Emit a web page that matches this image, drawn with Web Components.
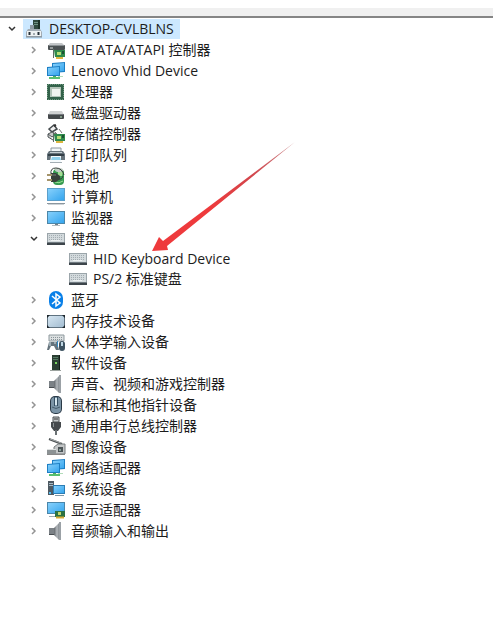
<!DOCTYPE html>
<html lang="zh-CN">
<head>
<meta charset="utf-8">
<meta name="viewport" content="width=device-width, initial-scale=1">
<title>设备管理器</title>
<style>
    body {
        margin: 0;
        background: #fff;
        color: #1c1c1c;
        font-family: "Open Sans", "Noto Sans CJK SC", sans-serif;
        font-size: 14px;
    }
</style>
</head>
<body>
<device-manager>
    <device-node label="DESKTOP-CVLBLNS" icon="root" open selected>
        <device-node label="IDE ATA/ATAPI 控制器" icon="ide"></device-node>
        <device-node label="Lenovo Vhid Device" icon="network"></device-node>
        <device-node label="处理器" icon="cpu"></device-node>
        <device-node label="磁盘驱动器" icon="disk"></device-node>
        <device-node label="存储控制器" icon="storage"></device-node>
        <device-node label="打印队列" icon="printer"></device-node>
        <device-node label="电池" icon="battery"></device-node>
        <device-node label="计算机" icon="computer"></device-node>
        <device-node label="监视器" icon="monitor"></device-node>
        <device-node label="键盘" icon="keyboard" open>
            <device-node label="HID Keyboard Device" icon="keyboard" leaf></device-node>
            <device-node label="PS/2 标准键盘" icon="keyboard" leaf></device-node>
        </device-node>
        <device-node label="蓝牙" icon="bluetooth"></device-node>
        <device-node label="内存技术设备" icon="memory"></device-node>
        <device-node label="人体学输入设备" icon="hid"></device-node>
        <device-node label="软件设备" icon="software"></device-node>
        <device-node label="声音、视频和游戏控制器" icon="speaker"></device-node>
        <device-node label="鼠标和其他指针设备" icon="mouse"></device-node>
        <device-node label="通用串行总线控制器" icon="usb"></device-node>
        <device-node label="图像设备" icon="camera"></device-node>
        <device-node label="网络适配器" icon="network"></device-node>
        <device-node label="系统设备" icon="system"></device-node>
        <device-node label="显示适配器" icon="display"></device-node>
        <device-node label="音频输入和输出" icon="speaker"></device-node>
    </device-node>
    <pointer-arrow slot="overlay"></pointer-arrow>
</device-manager>

<script>
// Shared gradients, repeated in every icon because ids do not cross shadow roots
const DEFS = `
    <defs>
        <linearGradient id="screen" x1="0" y1="0" x2="1" y2="1">
            <stop offset="0" stop-color="#86d0fb"/><stop offset="1" stop-color="#35a5ee"/>
        </linearGradient>
        <linearGradient id="metal" x1="0" y1="0" x2="1" y2="0">
            <stop offset="0" stop-color="#62676c"/><stop offset=".6" stop-color="#b4b9bd"/><stop offset="1" stop-color="#858b90"/>
        </linearGradient>
        <linearGradient id="pale" x1="0" y1="0" x2="1" y2="1">
            <stop offset="0" stop-color="#d6e6f2"/><stop offset="1" stop-color="#a3bdd1"/>
        </linearGradient>
    </defs>`;

const CARD = `
    <path d="M8 10h11v7H9z" fill="#2f8a4c"/>
    <path d="M7.500 9v9" stroke="#5d6b64"/>
    <path d="M11 12h4v3h-4z" fill="#b4dd74"/>
    <path d="M16 11h2v3h-2z" fill="#1c5232"/>
    <path d="M10 17h7v2h-7z" fill="#ddb640"/>`;

const ICONS = {
    root: `
        <path d="M9 1h7v10H9z" fill="#2f4a40"/><path d="M10 3.500h4M10 5.500h4" stroke="#6d9183"/>
        <path d="M14 1h2v10h-2z" fill="#1b3027"/>
        <path d="M6 6h4v4H6z" fill="#8d9aa3"/>
        <path d="M4 10h12l2 3v5H2v-5z" fill="#a3adb5"/><path d="M3 12h14v5H3z" fill="#eef2f4"/>
        <path d="M5.500 13v3M14.500 13v3" stroke="#26323a" stroke-width="2"/><path d="M10 14v2" stroke="#5b6870"/><path d="M2 18h16" stroke="#7b8791"/>`,
    ide: `
        <path d="M4 3h12l3 3H2z" fill="#c3c6c8"/><rect x="2" y="5" width="17" height="5" rx="1" fill="#4b5153"/>
        <path d="M3 5.500h15" stroke="#8b9194"/><path d="M4 8h3" stroke="#e2e6e6"/>${CARD}`,
    network: `
        <path d="M6 2l13-1v10l-13 1z" fill="#1d7fc4"/><path d="M7 3l11-1v8L7 11z" fill="url(#screen)"/>
        <path d="M1 6l13-1v10H1z" fill="#1d7fc4"/><path d="M2 7l11-1v8H2z" fill="url(#screen)"/>
        <path d="M7 15h3v2H7z" fill="#4fae62"/><path d="M3 17h11" stroke="#58bf70" stroke-width="2"/><path d="M12 15.500h5" stroke="#b2dcb9"/>`,
    cpu: `
        <path d="M1 2h17v16H1z" fill="#33624a"/><path d="M2 2.500h15M2 17.500h15" stroke="#6f9980" stroke-dasharray="1 1"/>
        <path d="M1.500 3v14M17.500 3v14" stroke="#6f9980" stroke-dasharray="1 1"/>
        <path d="M4 5h11v10H4z" fill="#b3c4b8"/><path d="M6 7h8v7H6z" fill="#f0f3ef"/>`,
    disk: `
        <path d="M4 8h12l2 4H2z" fill="#d0d2d3"/><rect x="2" y="11" width="16" height="5" rx="1" fill="#44484b"/>
        <path d="M3 11.500h14" stroke="#777c80"/><path d="M14 14h2" stroke="#b7e6bc"/>`,
    storage: `
        <path d="M3 5l5-4 3 4-5 3z" fill="#f1f1f1" stroke="#454b4e" stroke-width="1.500"/><path d="M8 2l2-1" stroke="#333" stroke-width="2"/>
        <path d="M2 10l4-2 4 2-4 3zM2 10v3l5 3" fill="#c7caca" stroke="#4e5456"/>
        <path d="M9 8l3 3M13 5l3 4" stroke="#777"/>${CARD}`,
    printer: `
        <path d="M5 3h10v4H5z" fill="#f2f7f9" stroke="#8b969d"/><path d="M3 6h14l2 3v6H1V9z" fill="#66737b"/>
        <path d="M4 7.500h12" stroke="#c3ccd1"/><path d="M2 10h16" stroke="#333f47" stroke-width="2"/>
        <path d="M5 11h10v6H4z" fill="#f4fafc"/><path d="M6 12h8l1 3H5z" fill="#8fd0ec"/><path d="M4 17.500h12" stroke="#a3aeb4"/>`,
    battery: `
        <rect x="7" y="3" width="11" height="16" rx="4" fill="#379a50"/><ellipse cx="13" cy="4" rx="4" ry="2" fill="#c2cec5"/>
        <path d="M12 6h5l-1 4h-4z" fill="#a4dd94"/><path d="M9 16q4 2 8-1" stroke="#9be096" fill="none"/>
        <path d="M5 8q-1-6 5-6t8 7M12 13q4 1 5-3" fill="none" stroke="#333d37"/>
        <path d="M5 7h5l4 3v3l-4 3H5z" fill="#38413b"/><path d="M6 9h4" stroke="#74807a"/><path d="M1 9h5M1 14h5" stroke="#a5946a" stroke-width="2"/>`,
    computer: `
        <path d="M1 1h18v13H1z" fill="#5b9fcb"/><path d="M2 2h16v11H2z" fill="url(#screen)"/>
        <path d="M1 16.500h18" stroke="#8b969e"/><path d="M2 17.500h16" stroke="#cdd3d7"/>`,
    monitor: `
        <path d="M1 3h18v13H1z" fill="#4c86a8"/><path d="M2 4h16v11H2z" fill="url(#screen)"/>
        <path d="M9 16h3v1H9z" fill="#717e86"/><path d="M6 17.500h8" stroke="#b2bbc0"/>`,
    keyboard: `
        <path d="M1 4h18v9H1z" fill="#9ba5aa"/><path d="M2 5h16v8H2z" fill="#d3dadd"/>
        <path d="M3 6.500h14M3 8.500h14M3 10.500h14" stroke="#a3adb2" stroke-dasharray="1 1"/>
        <path d="M5 11.500h9" stroke="#eef2f3"/><path d="M1 13h18v3H1z" fill="#3d454b"/><path d="M1 13.500h18" stroke="#717b81"/>`,
    bluetooth: `
        <rect x="3" y="1" width="14" height="18" rx="7" fill="#0a80e8"/>
        <path d="M6 6l8 7-4 3V4l4 3-8 7" fill="none" stroke="#fff" stroke-width="1.500"/>`,
    memory: `
        <rect x="1" y="4" width="18" height="13" rx="1" fill="#5f7280"/><path d="M2 5h16v11H2z" fill="url(#pale)"/>
        <path d="M1 4h3L1 7zM19 4v3l-3-3zM1 17v-3l3 3zM19 17h-3l3-3z" fill="#1d262c"/>`,
    hid: `
        <path d="M3 3h15v6H3z" fill="#dce0e1" stroke="#8e999e"/><path d="M5 5.500h11M5 7.500h11" stroke="#899499" stroke-dasharray="1 1"/>
        <path d="M3 10h8l2 8h-3l-2-4H5l-2 4H1z" fill="#66747d"/><path d="M4 10v4M8 11h2" stroke="#d0e2eb"/>
        <rect x="13" y="9" width="6" height="10" rx="3" fill="#3d5261"/><path d="M16 10v4" stroke="#bed6e3" stroke-width="2"/><path d="M11.500 9v6" stroke="#348ac3"/>`,
    software: `
        <path d="M6 2h8v15H6z" fill="#2b3f33"/><path d="M13 2h1v15h-1z" fill="#121e18"/>
        <path d="M7 4.500h5M7 6.500h5" stroke="#577b65"/><path d="M9 9h2v2H9z" fill="#78d65d"/><path d="M4 17.500h11" stroke="#9ba29e"/>`,
    speaker: `
        <path d="M3 7h5v7H3z" fill="#7b8186"/><path d="M8 7l5-5v17l-5-5z" fill="url(#metal)"/>
        <path d="M13 1h2v18h-2z" fill="#9ba1a6"/><path d="M3 13h5v1H3z" fill="#474c50"/>`,
    mouse: `
        <rect x="4" y="1" width="12" height="18" rx="5" fill="#2a3946"/><rect x="5" y="2" width="10" height="16" rx="4" fill="#7b94a6"/>
        <path d="M8.500 2v9M11.500 2v9" stroke="#344e61"/><path d="M10 3v7" stroke="#d6e7ef" stroke-width="2"/>
        <path d="M6 12q4 3 8 0" fill="none" stroke="#475f6f"/>`,
    usb: `
        <path d="M7 1h6v5H7z" fill="#c3c7c8" stroke="#4c5153"/><path d="M9 2v2M11 2v2" stroke="#333"/>
        <path d="M5 6h10v5l-3 4H8l-3-4z" fill="#45494c"/><path d="M7.500 7v4" stroke="#8a9194"/><path d="M10 14v5" stroke="#6b7174" stroke-width="2"/>`,
    camera: `
        <path d="M3 2l13 5" stroke="#4b5052" stroke-width="2"/><path d="M4 2l11 4" stroke="#a5a9aa"/>
        <path d="M8 10l4-3h7v10H8z" fill="#c3c6c7" stroke="#777d7f"/><path d="M1 12h9v5H1z" fill="#8c9294"/><path d="M1 12.500h9" stroke="#dde0e0"/>
        <rect x="12" y="10" width="5" height="5" fill="#4c5457"/><path d="M13 12h2v2h-2z" fill="#8ba09c"/><path d="M1 17.500h18" stroke="#888"/>`,
    system: `
        <path d="M2 2h6v14H2z" fill="#4d5962"/><path d="M3 4.500h4M3 6.500h4" stroke="#a7bac5"/><path d="M3 13h2v2H3z" fill="#56bbed"/>
        <path d="M7 6h12v9H7z" fill="#2c7db4"/><path d="M8 7h10v7H8z" fill="url(#screen)"/><path d="M9 16.500h9" stroke="#8197a4"/>`,
    display: `
        <path d="M1 2h18v12H1z" fill="#4a86aa"/><path d="M2 3h16v10H2z" fill="url(#screen)"/><path d="M3 16.500h6" stroke="#a0aab0"/>
        <path d="M9 11h10v6H9z" fill="#2b7142"/><path d="M12 12h3v3h-3z" fill="#c0d66c"/><path d="M10 17.500h8" stroke="#d8ac35" stroke-width="2"/>`
};

class DeviceIcon extends HTMLElement {
    connectedCallback() {
        this.attachShadow({ mode: 'open' });
        this.shadowRoot.innerHTML = `
            <style>
                :host { display: block; flex: none; width: 20px; height: 20px; }
                svg { display: block; width: 100%; height: 100%; }
            </style>
            <svg viewBox="0 0 20 20" aria-hidden="true">${DEFS}${ICONS[this.getAttribute('name')]}</svg>
        `;
    }
}

// One row of the tree; nested nodes go in the default slot
class DeviceNode extends HTMLElement {
    connectedCallback() {
        this.attachShadow({ mode: 'open' });
        this.render();
        this.attachEventListeners();
    }

    render() {
        const label = this.getAttribute('label');
        const toggle = this.hasAttribute('leaf')
            ? '<span class="spacer"></span>'
            : `<button class="toggle" type="button" aria-label="${label}">
                   <svg viewBox="0 0 10 10" aria-hidden="true"><path d="M3 2l3 3-3 3"/></svg>
               </button>`;

        this.shadowRoot.innerHTML = `
            <style>
                :host { display: block; }

                .row {
                    display: flex;
                    height: 21px;
                }

                :host([leaf]) .row,
                :host([selected]) .row {
                    height: 20px;
                }

                .toggle, .spacer {
                    flex: none;
                    width: 23px;
                }

                .toggle {
                    display: flex;
                    align-items: center;
                    justify-content: center;
                    padding: 0;
                    border: none;
                    background: none;
                    color: #949494;
                    cursor: pointer;
                }

                .toggle svg {
                    width: 10px;
                    height: 10px;
                    fill: none;
                    stroke: currentColor;
                    stroke-width: 1.5;
                }

                :host([open]) .toggle { color: #333; }
                :host([open]) .toggle svg { transform: rotate(90deg); }

                .item {
                    display: flex;
                    align-items: center;
                    gap: 5px;
                    padding: 0 6px 0 1px;
                    line-height: 20px;
                    white-space: nowrap;
                }

                :host([selected]) .item { background: #cce8ff; }

                .children {
                    display: none;
                    padding-left: 22px;
                }

                :host([open]) .children { display: block; }
            </style>
            <div class="row">
                ${toggle}
                <div class="item">
                    <device-icon name="${this.getAttribute('icon')}"></device-icon>
                    <span>${label}</span>
                </div>
            </div>
            <div class="children"><slot></slot></div>
        `;
    }

    attachEventListeners() {
        const toggle = this.shadowRoot.querySelector('.toggle');
        if (toggle) {
            toggle.addEventListener('click', () => {
                this.toggleAttribute('open');
            });
        }
    }
}

// Red arrow that points at the HID keyboard entry
class PointerArrow extends HTMLElement {
    connectedCallback() {
        this.attachShadow({ mode: 'open' });
        this.shadowRoot.innerHTML = `
            <style>
                :host {
                    position: absolute;
                    left: 152px;
                    top: 142px;
                    pointer-events: none;
                }
                svg { display: block; }
            </style>
            <svg width="144" height="110" viewBox="0 0 144 110" aria-hidden="true">
                <defs>
                    <linearGradient id="fade" x1="1" y1="0" x2="0" y2="1">
                        <stop offset="0" stop-color="#c9898c"/>
                        <stop offset=".3" stop-color="#d2464c"/>
                        <stop offset=".6" stop-color="#ee3a3c"/>
                    </linearGradient>
                </defs>
                <path d="M0 109L7 95l4 4L143 0 15 104l1 4z" fill="url(#fade)"/>
            </svg>
        `;
    }
}

class DeviceManager extends HTMLElement {
    connectedCallback() {
        this.attachShadow({ mode: 'open' });
        this.shadowRoot.innerHTML = `
            <style>
                :host {
                    display: block;
                    position: relative;
                    padding-top: 8px;
                }

                .toolbar {
                    height: 8px;
                    background: #f0f0f0;
                    border-bottom: 2px solid #858585;
                }

                .tree { padding-top: 1px; }
            </style>
            <div class="toolbar"></div>
            <div class="tree"><slot></slot></div>
            <slot name="overlay"></slot>
        `;
    }
}

customElements.define('device-icon', DeviceIcon);
customElements.define('device-node', DeviceNode);
customElements.define('pointer-arrow', PointerArrow);
customElements.define('device-manager', DeviceManager);
</script>
</body>
</html>
